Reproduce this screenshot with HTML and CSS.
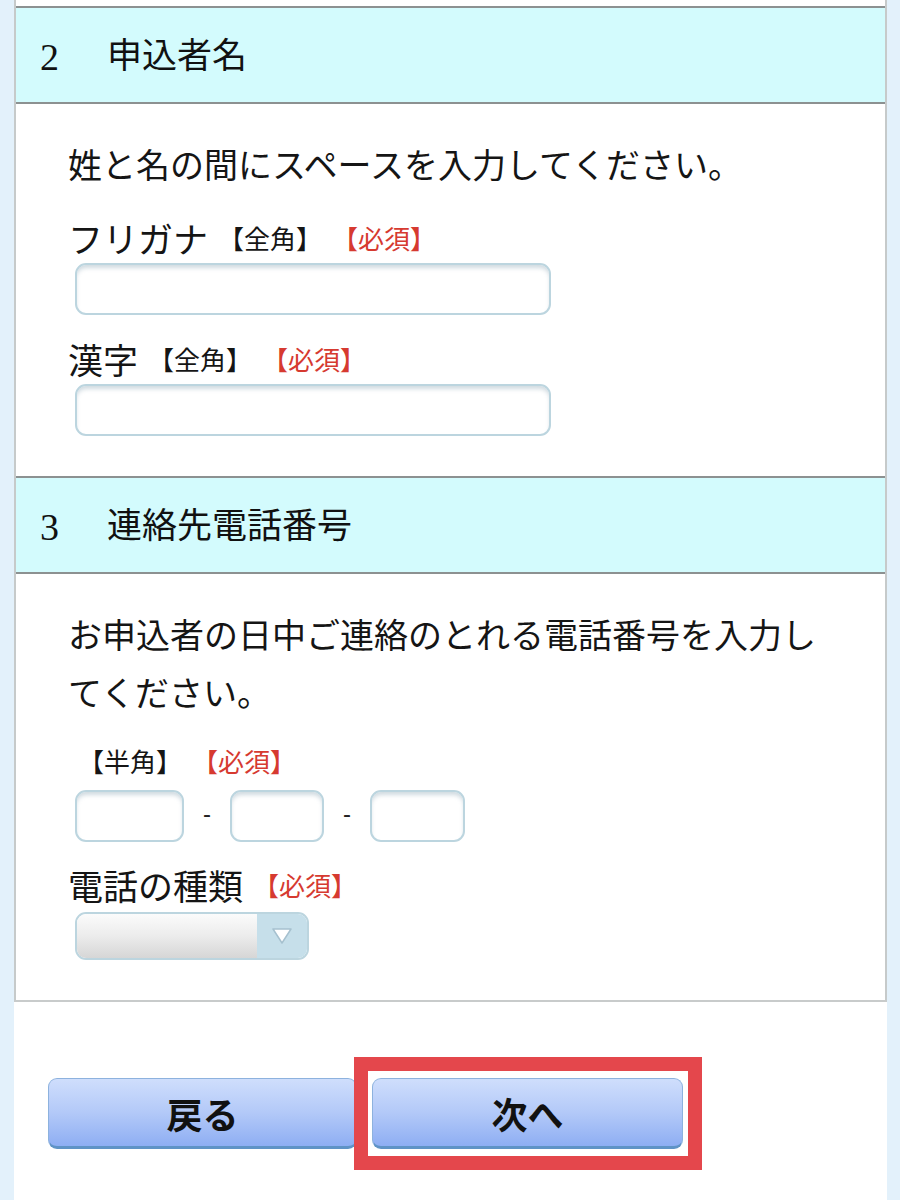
FILE: index.html
```html
<!DOCTYPE html>
<html lang="ja">
<head>
<meta charset="utf-8">
<title>申込フォーム</title>
<link rel="stylesheet" href="styles.css">
</head>
<body>
<div class="page">
  <div class="panel">
    <div class="top-gap"></div>
    <div class="sec-head"><span class="num">2</span>申込者名</div>
    <div class="sec-body">
      <p class="note">姓と名の間にスペースを入力してください。</p>
      <div class="label label-first"><span class="big">フリガナ</span><span class="small">【全角】</span><span class="small req">【必須】</span></div>
      <input class="text-input" type="text">
      <div class="label label-next"><span class="big">漢字</span><span class="small">【全角】</span><span class="small req">【必須】</span></div>
      <input class="text-input" type="text">
    </div>
    <div class="sec-head"><span class="num">3</span>連絡先電話番号</div>
    <div class="sec-body sec-body-3">
      <p class="note note-wide">お申込者の日中ご連絡のとれる電話番号を入力してください。</p>
      <div class="label label-hankaku"><span class="small">【半角】</span><span class="small req">【必須】</span></div>
      <div class="tel-row">
        <input class="tel tel-1" type="text">
        <span class="dash">-</span>
        <input class="tel tel-2" type="text">
        <span class="dash">-</span>
        <input class="tel tel-3" type="text">
      </div>
      <div class="label label-type"><span class="big">電話の種類</span><span class="small req">【必須】</span></div>
      <div class="select">
        <div class="select-field"></div>
        <div class="select-arrow">
          <svg width="22" height="18" viewBox="0 0 22 18"><polygon points="2,2 20,2 11,16" fill="#ffffff" stroke="#a6c1cf" stroke-width="1.5" stroke-linejoin="round"/></svg>
        </div>
      </div>
    </div>
  </div>
  <div class="buttons">
    <button class="btn btn-back" type="button">戻る</button>
    <div class="next-wrap">
      <button class="btn btn-next" type="button">次へ</button>
      <div class="highlight"></div>
    </div>
  </div>
</div>
</body>
</html>
```

FILE: styles.css
```css
html, body {
  margin: 0;
  padding: 0;
}
body {
  background: #e3f1fb;
  font-family: "Liberation Serif", "Noto Sans CJK JP", serif;
  color: #151515;
}
.page {
  margin-left: 14px;
  width: 873px;
  height: 1200px;
  background: #ffffff;
}
.panel {
  border-left: 2px solid #c6caca;
  border-right: 2px solid #c6caca;
  border-bottom: 2px solid #c8cbcb;
  background: #ffffff;
}
.top-gap {
  height: 6px;
}
.sec-head {
  height: 94px;
  box-sizing: border-box;
  padding-top: 3px;
  border-top: 2px solid #8c9191;
  border-bottom: 2px solid #8c9191;
  background: #d3fbfd;
  display: flex;
  align-items: center;
  padding-left: 24px;
  font-size: 35px;
  line-height: 40px;
  color: #111;
}
.sec-head {
  height: 98px;
}
.num {
  display: inline-block;
  width: 67px;
  font-size: 38px;
}
.sec-body {
  padding: 38px 50px 40px 52px;
}
.sec-body-3 {
  padding-top: 34px;
}
.note {
  margin: 0;
  font-size: 34px;
  line-height: 50px;
}
.note-wide {
  line-height: 58px;
}
.label {
  display: flex;
  align-items: center;
  height: 44px;
}
.label-first { margin-top: 23px; }
.label-next { margin-top: 21px; }
.label-hankaku { margin-top: 14px; }
.label-type { margin-top: 20px; }
.big {
  font-size: 35px;
}
.small {
  font-size: 26px;
  margin-left: 10px;
}
.req {
  color: #d63a30;
}
.text-input {
  display: block;
  margin: 4px 0 0 7px;
  width: 476px;
  height: 52px;
  box-sizing: border-box;
  border: 2px solid #bcd5df;
  border-radius: 11px;
  box-shadow: inset 0 4px 4px -1px rgba(120, 150, 165, 0.35);
  background: #fff;
  outline: none;
}
.tel-row {
  display: flex;
  align-items: center;
  margin: 8px 0 0 7px;
}
.tel {
  height: 52px;
  box-sizing: border-box;
  border: 2px solid #bcd5df;
  border-radius: 11px;
  box-shadow: inset 0 4px 4px -1px rgba(120, 150, 165, 0.35);
  background: #fff;
  outline: none;
  padding: 0;
}
.tel-1 { width: 109px; }
.tel-2 { width: 94px; }
.tel-3 { width: 95px; }
.dash {
  font-family: "Liberation Sans", sans-serif;
  font-size: 24px;
  width: 46px;
  text-align: center;
  color: #222;
  margin-top: -4px;
}
.select {
  display: flex;
  margin: 6px 0 0 7px;
  width: 234px;
  height: 48px;
  box-sizing: border-box;
  border: 2px solid #bcd5df;
  border-radius: 11px;
  overflow: hidden;
}
.select-field {
  flex: 1;
  background: linear-gradient(to bottom, #fbfbfb 0%, #ececec 50%, #d6d6d6 100%);
}
.select-arrow {
  width: 50px;
  background: #c6dfea;
  display: flex;
  align-items: center;
  justify-content: center;
}
.buttons {
  display: flex;
  padding-left: 34px;
  margin-top: 76px;
  gap: 15px;
}
.btn {
  height: 71px;
  box-sizing: border-box;
  border: 1px solid #8db2de;
  border-bottom: 3px solid #5f93c6;
  border-radius: 9px;
  background: linear-gradient(to bottom, #cfdefc 0%, #b3c9f8 50%, #8eaef3 100%);
  font-family: "Noto Sans CJK JP", sans-serif;
  font-weight: 700;
  font-size: 36px;
  color: #111;
  padding: 0;
}
.btn-back {
  width: 309px;
}
.next-wrap {
  position: relative;
}
.btn-next {
  width: 311px;
}
.highlight {
  position: absolute;
  left: -18px;
  top: -21px;
  right: -19px;
  bottom: -21px;
  border: 14px solid #e4474c;
  pointer-events: none;
}
```
